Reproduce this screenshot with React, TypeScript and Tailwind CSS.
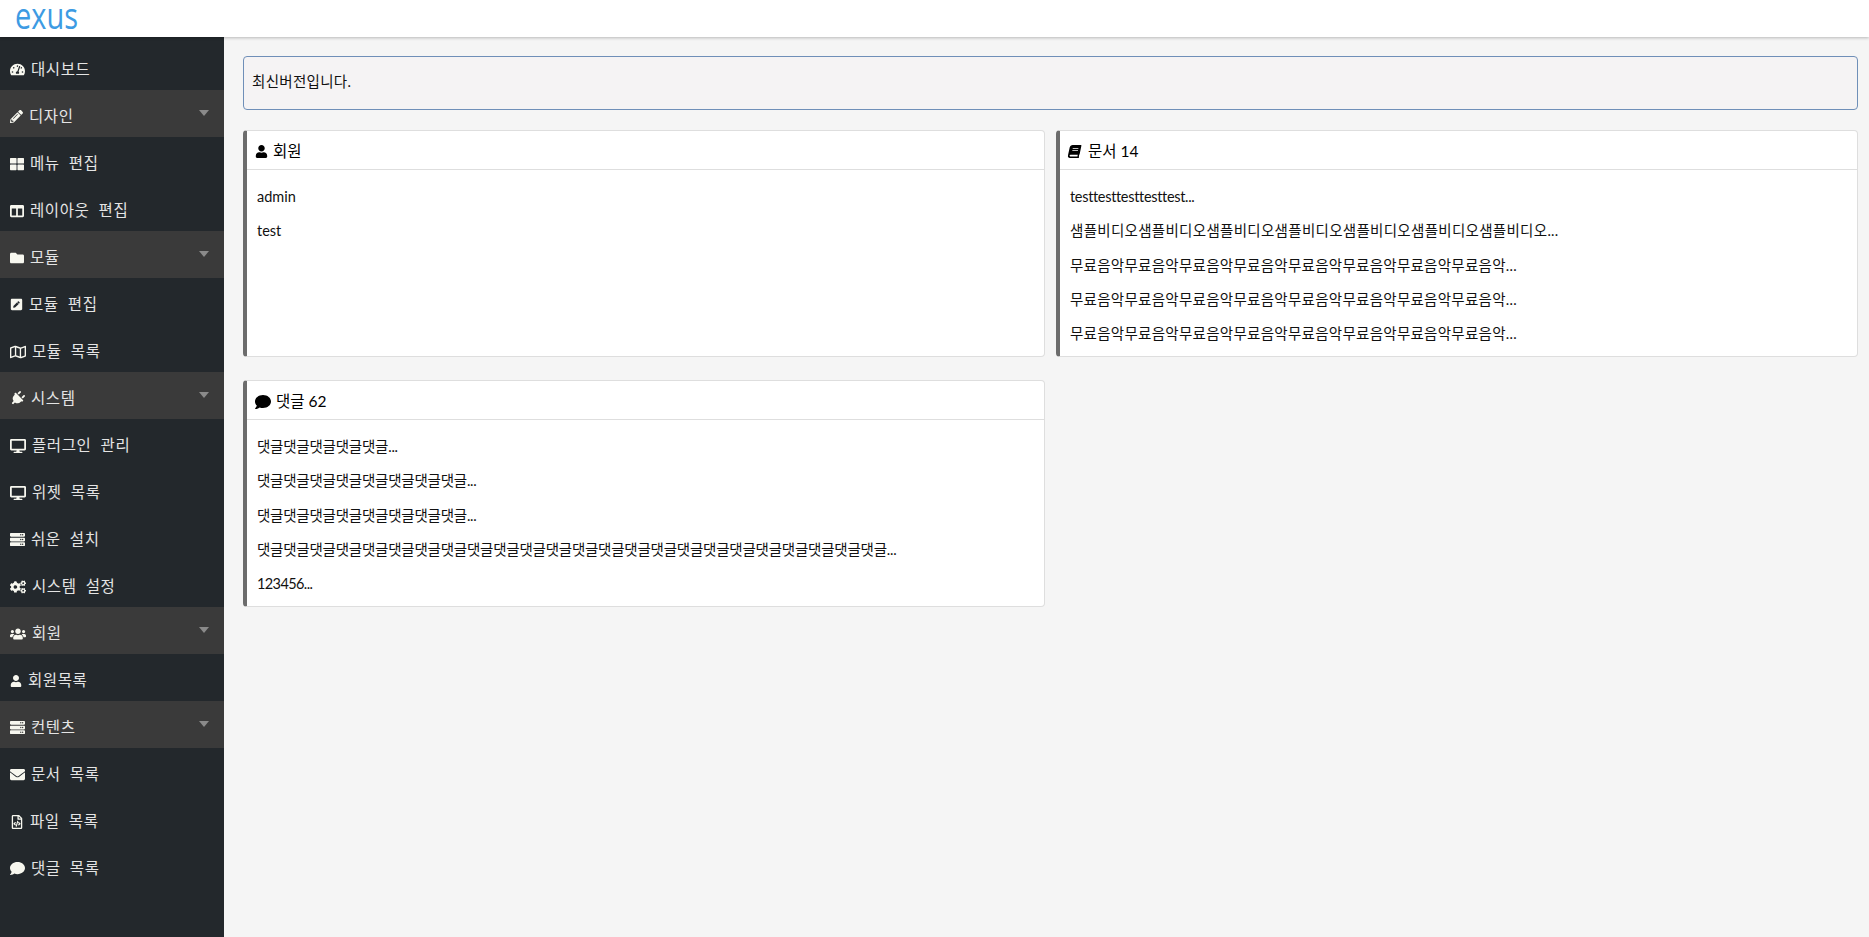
import React from "react";
import {
  FaTachometerAlt, FaPencilAlt, FaThLarge, FaColumns, FaFolder, FaPenSquare, FaRegMap, FaPlug, FaDesktop, FaServer, FaCogs, FaUsers, FaUser, FaEnvelope, FaRegFileCode, FaComment, FaBook,
} from "react-icons/fa";

const font = { fontFamily: 'Lato, "Noto Sans CJK KR", "Noto Sans", sans-serif' };

type Row = { label: string; icon: React.ReactNode; group?: boolean };
const rows: Row[] = [
  { label: "대시보드", icon: <FaTachometerAlt size={15} /> },
  { label: "디자인", icon: <FaPencilAlt size={13} />, group: true },
  { label: "메뉴 편집", icon: <FaThLarge size={14} /> },
  { label: "레이아웃 편집", icon: <FaColumns size={14} /> },
  { label: "모듈", icon: <FaFolder size={14} />, group: true },
  { label: "모듈 편집", icon: <FaPenSquare size={13} /> },
  { label: "모듈 목록", icon: <FaRegMap size={16} /> },
  { label: "시스템", icon: <span className="block rotate-45"><FaPlug size={15} /></span>, group: true },
  { label: "플러그인 관리", icon: <FaDesktop size={16} /> },
  { label: "위젯 목록", icon: <FaDesktop size={16} /> },
  { label: "쉬운 설치", icon: <FaServer size={15} /> },
  { label: "시스템 설정", icon: <FaCogs size={16} /> },
  { label: "회원", icon: <FaUsers size={16} />, group: true },
  { label: "회원목록", icon: <FaUser size={12} /> },
  { label: "컨텐츠", icon: <FaServer size={15} />, group: true },
  { label: "문서 목록", icon: <FaEnvelope size={15} /> },
  { label: "파일 목록", icon: <FaRegFileCode size={14} /> },
  { label: "댓글 목록", icon: <FaComment size={15} /> },
];

function SideRow({ r }: { r: Row }) {
  return (
    <div className={`flex h-[47px] items-center pl-[10px] pr-[15px] pt-[6px] text-[15.5px] text-[#e4e4e4] ${r.group ? "bg-[#3a3a3a]" : ""}`}>
      <span className="text-[#f7f7ef]">{r.icon}</span>
      <span className="ml-[6px] whitespace-pre tracking-[0.6px]">{r.label.replace(" ", "  ")}</span>
      {r.group && (
        <span className="ml-auto mb-[8px] h-0 w-0 border-x-[5px] border-t-[6px] border-x-transparent border-t-[#8a8a8a]" />
      )}
    </div>
  );
}

type Item = { t: string; cls?: string };

function Card({ icon, title, items, gap = "gap-[5px]" }: { icon: React.ReactNode; title: string; items: Item[]; gap?: string }) {
  return (
    <div className="h-[227px] overflow-hidden rounded-[4px] border border-l-4 border-[#dedede] border-l-[#6c6c6c] bg-white">
      <div className={`flex h-[39px] items-center border-b border-[#dedede] pl-[8px] pt-[3px] text-[15.5px] text-black ${gap}`}>
        {icon}
        <span>{title}</span>
      </div>
      <div className="flex flex-col px-[10px] pt-[9.5px] text-[14.5px] text-[#111]">
        {items.map((it, i) => (
          <div key={i} className={`flex h-[34.4px] items-center whitespace-nowrap ${it.cls ?? ""}`}>{it.t}</div>
        ))}
      </div>
    </div>
  );
}

const music = { t: "무료음악".repeat(8) + "...", cls: "tracking-[0.28px]" };
const c = "댓글";
const cTrack = "tracking-[-0.22px]";

export default function App() {
  return (
    <div style={font} className="flex h-[937px] w-[1869px] flex-col overflow-hidden bg-[#f5f5f5]">
      <header className="z-10 flex h-[37px] shrink-0 items-start bg-white pl-[14px] shadow-[0_1px_3px_rgba(0,0,0,0.25)]">
        <svg width="68" height="37" viewBox="0 0 68 37">
          <text x="1" y="29" fontFamily="Open Sans, sans-serif" fontSize="37" fill="#3d9be3" textLength="63" lengthAdjust="spacingAndGlyphs">exus</text>
        </svg>
      </header>
      <div className="flex min-h-0 flex-1">
        <aside className="w-[224px] shrink-0 bg-[#23282c] pt-[6px]">
          {rows.map((r) => <SideRow key={r.label} r={r} />)}
        </aside>
        <main className="flex-1 pl-[19px] pr-[11px] pt-[19px]">
          <div className="flex h-[54px] items-center rounded-[4px] border border-[#6f8fb8] bg-[#f5f3f4] pb-[2px] pl-2 text-[14.5px] tracking-[0.3px] text-[#111]">최신버전입니다.</div>
          <div className="mt-5 grid grid-cols-2 gap-x-[11px] gap-y-[23px]">
            <Card icon={<FaUser size={13} />} title="회원" items={[{ t: "admin" }, { t: "test" }]} />
            <Card
              gap="gap-[7px]"
              icon={<span className="block -skew-x-12"><FaBook size={13} /></span>}
              title="문서 14"
              items={[{ t: "testtesttesttesttest...", cls: "tracking-[-0.32px]" }, { t: "샘플비디오".repeat(7) + "...", cls: "tracking-[0.3px]" }, music, music, music]}
            />
            <Card
              icon={<FaComment size={16} />}
              title="댓글 62"
              items={[
                { t: c.repeat(5) + "...", cls: cTrack },
                { t: c.repeat(8) + "...", cls: cTrack },
                { t: c.repeat(8) + "...", cls: cTrack },
                { t: c.repeat(24) + "...", cls: cTrack },
                { t: "123456...", cls: "tracking-[-0.6px]" },
              ]}
            />
          </div>
        </main>
      </div>
    </div>
  );
}
